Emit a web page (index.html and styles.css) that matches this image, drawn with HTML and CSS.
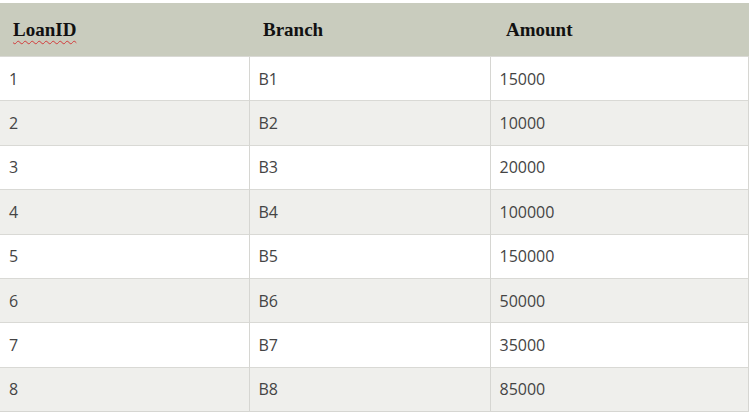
FILE: index.html
```html
<!DOCTYPE html>
<html>
<head>
<meta charset="utf-8">
<link rel="stylesheet" href="styles.css">
</head>
<body>
<table class="loans">
  <thead>
    <tr>
      <th class="c1"><span class="spell">LoanID</span></th>
      <th class="c2">Branch</th>
      <th class="c3">Amount</th>
    </tr>
  </thead>
  <tbody>
    <tr><td>1</td><td>B1</td><td>15000</td></tr>
    <tr><td>2</td><td>B2</td><td>10000</td></tr>
    <tr><td>3</td><td>B3</td><td>20000</td></tr>
    <tr><td>4</td><td>B4</td><td>100000</td></tr>
    <tr><td>5</td><td>B5</td><td>150000</td></tr>
    <tr><td>6</td><td>B6</td><td>50000</td></tr>
    <tr><td>7</td><td>B7</td><td>35000</td></tr>
    <tr><td>8</td><td>B8</td><td>85000</td></tr>
  </tbody>
</table>
</body>
</html>
```
FILE: styles.css
```css
html, body {
  margin: 0;
  padding: 0;
  background: #ffffff;
}
body {
  padding-top: 3px;
}
.loans {
  border-collapse: collapse;
  width: 749px;
  table-layout: fixed;
}
.loans th {
  background: #c9ccbe;
  height: 52px;
  padding: 1px 0 0 13px;
  text-align: left;
  font-family: "Liberation Serif", "Times New Roman", serif;
  font-weight: bold;
  font-size: 19px;
  color: #111;
  vertical-align: middle;
}
.loans th.c1 { width: 236px; }
.loans th.c2 { width: 227px; padding-left: 14px; }
.loans th.c3 { padding-left: 16px; }
.spell {
  text-decoration: underline wavy #d23a3a;
  text-decoration-thickness: 1px;
  text-underline-offset: 4px;
}
.loans td {
  height: 43.4px;
  padding: 0 0 0 9px;
  font-family: "Open Sans", "Noto Sans", sans-serif;
  font-size: 16px;
  color: #444;
  border-top: 1px solid #d9d9d5;
  border-left: 1px solid #d6d6d2;
  vertical-align: middle;
}
.loans td:first-child { border-left: none; }
.loans td:last-child { border-right: 1px solid #d6d6d2; }
.loans tbody tr:nth-child(even) td { background: #efefec; }
.loans tbody tr:nth-child(odd) td { background: #ffffff; }
.loans tbody tr:last-child td { border-bottom: 1px solid #d6d6d2; }
```
